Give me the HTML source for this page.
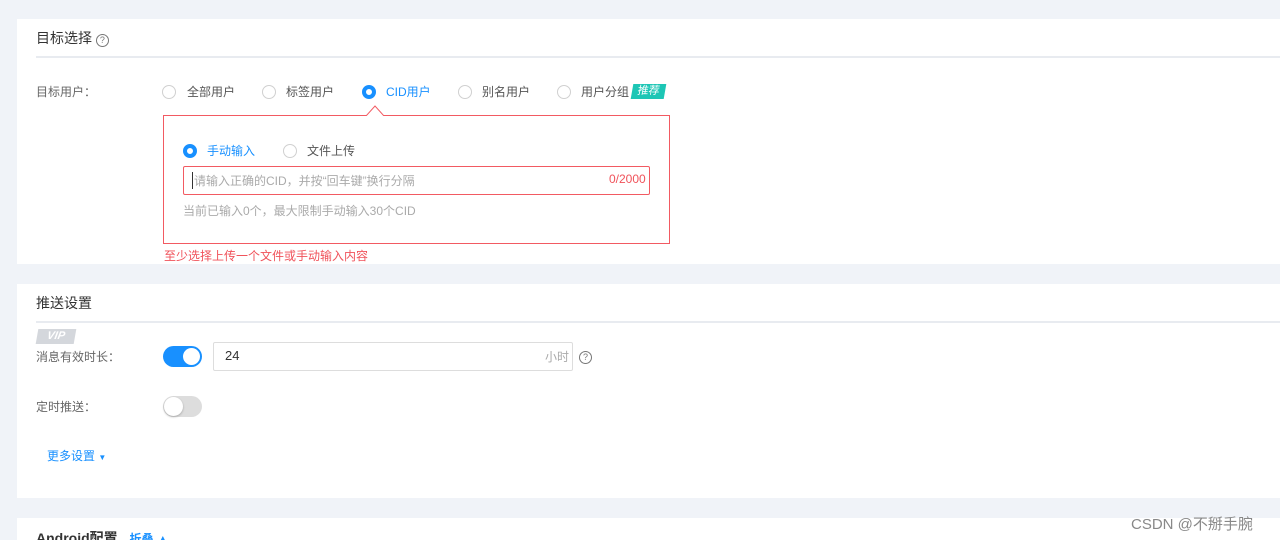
<!DOCTYPE html>
<html><head><meta charset="utf-8"><style>
*{box-sizing:border-box;margin:0;padding:0}
html,body{width:1280px;height:540px;overflow:hidden}
body{background:#f0f3f8;font-family:"Liberation Sans","Noto Sans CJK SC",sans-serif;font-size:12px;color:#666;position:relative}
.p{position:absolute;left:17px;right:0;background:#fff}
.a{position:absolute;white-space:nowrap}
.t{font-size:14px;color:#333}
.hr{position:absolute;left:19px;right:0;height:2px;background:#e8ebf0}
.r{position:absolute;width:14px;height:14px;border:1px solid #d0d0d0;border-radius:50%;background:#fff}
.r.on{border:4px solid #1890ff}
.q{display:inline-block;width:13px;height:13px;border:1px solid #777;border-radius:50%;font-size:9px;line-height:11px;text-align:center;color:#777}
</style></head><body>
<div class="p" style="top:19px;height:245px">
 <div class="a t" style="left:19px;top:9px">目标选择 <span class="q">?</span></div>
 <div class="hr" style="top:37px"></div>
 <div class="a" style="left:19px;top:64px">目标用户：</div>
 <div class="r" style="left:145px;top:66px"></div><div class="a" style="left:170px;top:64px;color:#555">全部用户</div>
 <div class="r" style="left:245px;top:66px"></div><div class="a" style="left:269px;top:64px;color:#555">标签用户</div>
 <div class="r on" style="left:345px;top:66px"></div><div class="a" style="left:369px;top:64px;color:#1890ff">CID用户</div>
 <div class="r" style="left:441px;top:66px"></div><div class="a" style="left:465px;top:64px;color:#555">别名用户</div>
 <div class="r" style="left:540px;top:66px"></div><div class="a" style="left:564px;top:64px;color:#555">用户分组</div>
 <div class="a" style="left:615px;top:65px;height:15px;width:33px;background:#1dc6b5;color:#fff;font-size:11px;line-height:15px;text-align:center;transform:skewX(-10deg)">推荐</div>
 <div class="a" style="left:146px;top:96px;width:507px;height:129px;border:1px solid #f25a62"></div>
 <svg class="a" style="left:349px;top:86px" width="18" height="11"><path d="M0 11 L9 1 L18 11" fill="#fff" stroke="#f25a62"/></svg>
 <div class="r on" style="left:166px;top:125px"></div><div class="a" style="left:190px;top:123px;color:#1890ff">手动输入</div>
 <div class="r" style="left:266px;top:125px"></div><div class="a" style="left:290px;top:123px;color:#555">文件上传</div>
 <div class="a" style="left:166px;top:147px;width:467px;height:29px;border:1px solid #f25a62;border-radius:2px"></div>
 <div class="a" style="left:175px;top:153px;color:#aaa;font-size:12px;border-left:1px solid #333;padding-left:1px">请输入正确的CID，并按“回车键”换行分隔</div>
 <div class="a" style="left:592px;top:153px;color:#f0525a">0/2000</div>
 <div class="a" style="left:166px;top:183px;color:#aaa">当前已输入0个，最大限制手动输入30个CID</div>
 <div class="a" style="left:147px;top:228px;color:#f0525a">至少选择上传一个文件或手动输入内容</div>
</div>
<div class="p" style="top:284px;height:214px">
 <div class="a t" style="left:19px;top:9px">推送设置</div>
 <div class="hr" style="top:37px"></div>
 <div class="a" style="left:20px;top:45px;width:38px;height:15px;background:#d4d7dc;color:#fff;font-size:11px;font-style:italic;font-weight:bold;line-height:15px;text-align:center;transform:skewX(-10deg)">VIP</div>
 <div class="a" style="left:19px;top:64px">消息有效时长：</div>
 <div class="a" style="left:146px;top:62px;width:39px;height:21px;border-radius:11px;background:#1890ff"><div style="position:absolute;right:2px;top:2px;width:17px;height:17px;border-radius:50%;background:#fff"></div></div>
 <div class="a" style="left:196px;top:58px;width:360px;height:29px;border:1px solid #ddd;border-radius:2px"></div>
 <div class="a" style="left:208px;top:64px;color:#333;font-size:13px">24</div>
 <div class="a" style="left:528px;top:64px;color:#aaa">小时</div>
 <div class="a" style="left:562px;top:65px"><span class="q">?</span></div>
 <div class="a" style="left:19px;top:114px">定时推送：</div>
 <div class="a" style="left:146px;top:112px;width:39px;height:21px;border-radius:11px;background:#ddd"><div style="position:absolute;left:1px;top:1px;width:19px;height:19px;border-radius:50%;background:#fff;box-shadow:0 1px 2px rgba(0,0,0,.25)"></div></div>
 <div class="a" style="left:30px;top:163px;color:#1890ff">更多设置 <span style="font-size:8px">▼</span></div>
</div>
<div class="p" style="top:518px;height:22px">
 <div class="a t" style="left:19px;top:10px;font-weight:bold;color:#333">Android配置 <span style="color:#1890ff;font-size:12px;margin-left:8px">折叠 ▲</span></div>
</div>
<div class="a" style="left:1131px;top:513px;font-size:15px;color:#888">CSDN @不掰手腕</div>
</body></html>
